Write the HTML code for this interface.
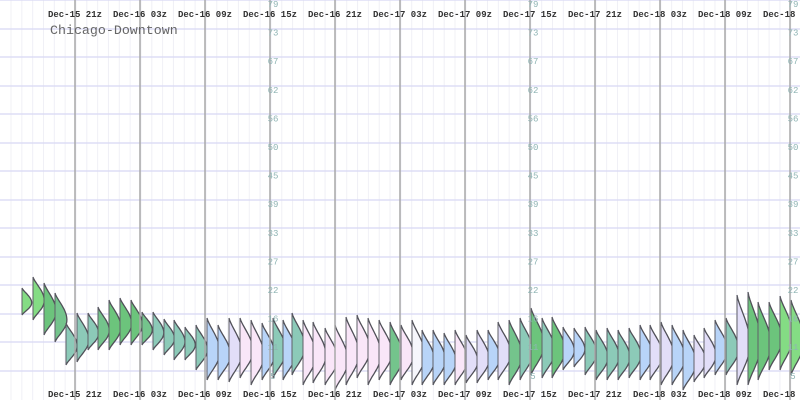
<!DOCTYPE html>
<html><head><meta charset="utf-8"><style>
html,body{margin:0;padding:0;background:#fff;width:800px;height:400px;overflow:hidden}
svg{display:block}
text{font-family:"Liberation Mono","DejaVu Sans Mono",monospace}
</style></head><body>
<svg id="s" width="800" height="400" xmlns="http://www.w3.org/2000/svg"></svg>
<script>
var s=document.getElementById('s'),h='';
for(var x=11;x<800;x+=10.83)h+='<line x1="'+x+'" y1="0" x2="'+x+'" y2="400" stroke="#f0f0f6" stroke-width="1"/>';
for(var k=0;k<14;k++){var y=Math.round(k*28.5);h+='<line x1="0" y1="'+y+'" x2="800" y2="'+y+'" stroke="#d8d8f4" stroke-width="1.2"/>';}
var C={g:'#6cc47c',l:'#84dc84',t:'#8ccab8',b:'#b8d4f8',v:'#e2def8',p:'#f9e6f8',w:'#f6f6fc',m:'#74c48c'};
var d=[[22,288,315,'l'],[33,277,320,'l'],[44,283,335,'g'],[55,293,342,'m'],[66,323,365,'t'],[77,313,362,'t'],[88,313,350,'t'],[98,307,350,'m'],[109,300,350,'g'],[120,298,345,'g'],[131,300,345,'g'],[142,312,345,'m'],[153,312,350,'t'],[164,319,355,'t'],[174,320,360,'t'],[185,327,360,'t'],[196,325,370,'t'],[207,318,380,'b'],[218,325,380,'b'],[229,318,382,'v'],[240,318,378,'p'],[251,320,385,'p'],[262,323,380,'b'],[273,318,378,'t'],[283,320,380,'b'],[292,313,375,'t'],[303,320,385,'p'],[313,322,383,'p'],[325,328,385,'p'],[335,325,390,'p'],[346,317,385,'p'],[357,315,378,'p'],[368,318,385,'p'],[379,320,380,'p'],[390,322,385,'m'],[401,325,380,'p'],[412,320,385,'w'],[422,330,385,'b'],[433,330,385,'b'],[444,333,385,'b'],[455,330,385,'p'],[466,335,383,'v'],[477,330,383,'v'],[488,330,380,'b'],[498,322,380,'v'],[509,320,385,'m'],[520,318,380,'t'],[531,308,375,'g'],[542,318,378,'t'],[552,317,378,'g'],[563,327,370,'b'],[574,328,367,'b'],[585,327,375,'t'],[596,330,380,'t'],[607,328,380,'t'],[618,330,380,'t'],[629,328,378,'t'],[640,325,380,'b'],[650,325,380,'v'],[661,322,385,'v'],[672,325,385,'b'],[683,330,390,'b'],[694,335,382,'v'],[704,328,378,'v'],[715,320,375,'b'],[726,318,375,'t'],[737,295,385,'v'],[748,292,385,'g'],[758,302,380,'g'],[769,302,370,'g'],[780,296,370,'l'],[791,300,375,'l']];
d.forEach(function(p){var x=p[0],t=p[1],b=p[2],H=b-t,w=Math.min(13,7+H*0.1),pts=[];
for(var i=0;i<=24;i++){var u=i/24,y=t+H*u,v=u<0.55?u/0.55*0.5:0.5+(u-0.55)/0.45*0.5;pts.push((x+w*Math.pow(Math.sin(Math.PI*v),1.3)).toFixed(1)+','+y.toFixed(1));}
var line=pts.join(' ');
h+='<polygon points="'+x+','+t+' '+line+' '+x+','+b+'" fill="'+C[p[3]]+'"/>';
h+='<polyline points="'+line+'" fill="none" stroke="#505058" stroke-width="1.3"/>';
h+='<line x1="'+x+'" y1="'+t+'" x2="'+x+'" y2="'+b+'" stroke="#606068" stroke-width="1"/>';});
for(var i=0;i<12;i++){var x=75+65*i;h+='<line x1="'+x+'" y1="0" x2="'+x+'" y2="400" stroke="#a8a8a8" stroke-width="1.5"/>';}
var L=['Dec-15 21z','Dec-16 03z','Dec-16 09z','Dec-16 15z','Dec-16 21z','Dec-17 03z','Dec-17 09z','Dec-17 15z','Dec-17 21z','Dec-18 03z','Dec-18 09z','Dec-18 15z'];
L.forEach(function(t,i){var x=75+65*i;h+='<text x="'+x+'" y="17" font-size="9" font-weight="bold" fill="#333" text-anchor="middle" xml:space="preserve">'+t+'</text><text x="'+x+'" y="397" font-size="9" font-weight="bold" fill="#333" text-anchor="middle" xml:space="preserve">'+t+'</text>';});
var Y=['79','73','67','62','56','50','45','39','33','27','22','16','11','5'];
[270,530,790].forEach(function(x){Y.forEach(function(t,k){h+='<text x="'+(x+3)+'" y="'+(k*28.6+7)+'" font-size="9" fill="#8fb4b4" text-anchor="middle">'+t+'</text>';});});
h+='<text x="50" y="34" font-size="13.3" fill="#666">Chicago-Downtown</text>';
s.innerHTML=h;
</script>
</body></html>
